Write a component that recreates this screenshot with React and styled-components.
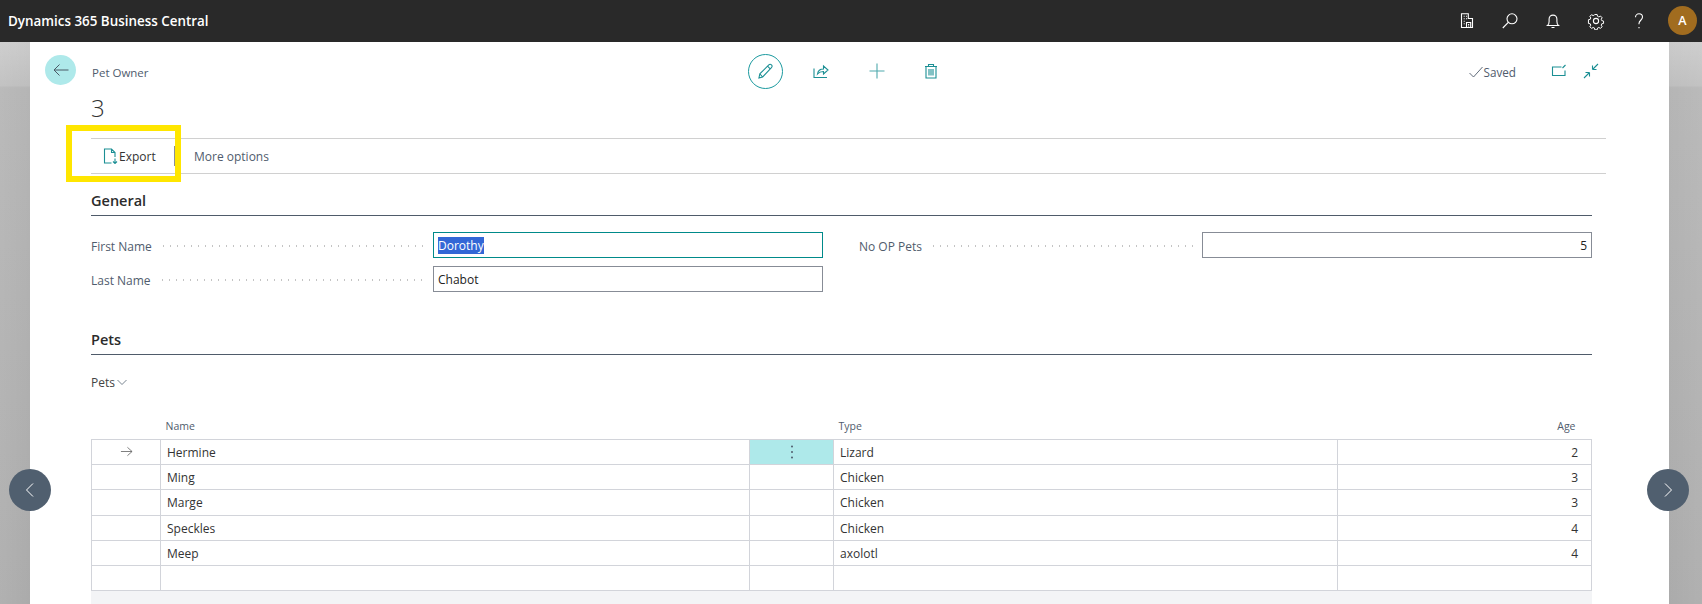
import React from 'react'
import styled, {createGlobalStyle} from 'styled-components'

const GlobalStyle = createGlobalStyle`
    html, body {
        margin: 0;
        padding: 0;
        height: 100%;
        overflow: hidden;
    }
    body {
        font-family: "Open Sans", "Noto Sans", "Liberation Sans", sans-serif;
        font-size: 13px;
        color: #333;
    }
    * {
        box-sizing: border-box;
    }
`

const Page = styled.div`
    position: relative;
    width: 1702px;
    height: 604px;
    overflow: hidden;
    display: flex;
    flex-direction: column;
`

const TopBar = styled.header`
    height: 42px;
    flex: none;
    background: #292929;
    color: #fff;
    display: flex;
    align-items: center;
    padding: 0 5px 0 8px;
`

const Brand = styled.div`
    flex: 1;
    font-size: 13.4px;
    font-weight: 600;
`

const TopIcons = styled.div`
    display: flex;
    align-items: center;
    gap: 25px;
    margin-right: 20px;
`

const TopIcon = styled.svg`
    width: 18px;
    height: 18px;
    fill: none;
    stroke: #fff;
    stroke-width: 1.1;
    display: block;
`

const Avatar = styled.div`
    width: 29px;
    height: 29px;
    border-radius: 50%;
    background: #a16c1f;
    color: #fff;
    font-size: 12.5px;
    font-weight: 600;
    display: flex;
    align-items: center;
    justify-content: center;
    margin-top: -1px;
`

const Backdrop = styled.div`
    flex: 1;
    min-height: 0;
    display: flex;
    background:
        linear-gradient(90deg, rgba(255,255,255,0.07) 0, rgba(255,255,255,0) 30px, rgba(255,255,255,0) 1668px, rgba(255,255,255,0.07) 1702px),
        linear-gradient(180deg, #cbcbcb 0, #bebebe 44px, #b6b6b6 45px, #b6b6b6 46px, #b5b5b5 47px, #ababab 100%);
    padding: 0 34px 0 30px;
`

const Panel = styled.main`
    flex: 1;
    background: #fff;
    padding: 0 77px 0 61px;
    display: flex;
    flex-direction: column;
`

const CommandRow = styled.div`
    height: 59px;
    flex: none;
    display: grid;
    grid-template-columns: 703px auto 1fr;
    align-items: center;
    margin-left: -46px;
`

const TitleArea = styled.div`
    display: flex;
    align-items: center;
    gap: 16px;
`

const BackButton = styled.div`
    width: 31px;
    height: 30px;
    border-radius: 50%;
    background: #aee9ea;
    display: flex;
    align-items: center;
    justify-content: center;
    margin-top: -3px;
`

const PageType = styled.div`
    font-size: 11.5px;
    color: #505c6d;
    margin-top: 1px;
`

const Actions = styled.div`
    display: flex;
    align-items: center;
    gap: 40px;
    margin-top: -1px;
`

const EditCircle = styled.div`
    width: 35px;
    height: 35px;
    border-radius: 50%;
    border: 1px solid #1b9a9f;
    display: flex;
    align-items: center;
    justify-content: center;
    margin-right: -10px;
`

const Icon = styled.svg`
    width: ${p => p.$size || 18}px;
    height: ${p => p.$size || 18}px;
    fill: none;
    stroke: ${p => p.$color || '#1b8f94'};
    stroke-width: ${p => p.$stroke || 1.1};
    display: block;
    flex: none;
`

const TrashIcon = styled(Icon)`
    margin-left: -2px;
`

const StatusArea = styled.div`
    display: flex;
    align-items: center;
    justify-content: flex-end;
    margin-right: -7px;
`

const Saved = styled.div`
    display: flex;
    align-items: center;
    gap: 1px;
    font-size: 11.7px;
    color: #505c6d;
    margin-right: 35px;
`

const StatusIcons = styled.div`
    display: flex;
    align-items: center;
    gap: 16px;
    margin-top: -2px;
`

const RecordTitle = styled.div`
    height: 46px;
    flex: none;
    font-size: 24px;
    font-weight: 300;
    line-height: 32px;
    color: #333;
    margin-top: -9px;
`

const ActionBar = styled.div`
    height: 36px;
    flex: none;
    border-top: 1px solid #d0d0d0;
    border-bottom: 1px solid #d0d0d0;
    display: flex;
    align-items: center;
    margin-right: -14px;
`

const ExportAction = styled.div`
    display: flex;
    align-items: center;
    gap: 1px;
    padding-left: 11px;
    width: 83px;
    color: #333;
    font-size: 12px;
`

const Separator = styled.div`
    width: 1px;
    height: 20px;
    background: #8a8f96;
`

const MoreAction = styled.div`
    color: #505c6d;
    font-size: 12px;
    margin-left: 19px;
`

const Highlight = styled.div`
    position: absolute;
    left: 66px;
    top: 125px;
    width: 115px;
    height: 57px;
    border: 6px solid #ffe600;
    pointer-events: none;
`

const SectionTitle = styled.div`
    font-size: 14.5px;
    font-weight: 600;
    color: #2b2b2b;
    height: 26px;
    line-height: 22px;
    border-bottom: 1px solid #4f5b6a;
    margin-top: ${p => p.$top || 0}px;
    flex: none;
`

const FieldColumns = styled.div`
    display: grid;
    grid-template-columns: 732px 1fr;
    gap: 36px;
    margin-top: 16px;
    height: 60px;
    flex: none;
`

const FieldStack = styled.div`
    display: flex;
    flex-direction: column;
    gap: 8px;
`

const FieldRow = styled.div`
    display: flex;
    align-items: center;
    height: 26px;
`

const FieldLabel = styled.div`
    font-size: 12px;
    color: #505c6d;
    white-space: nowrap;
    margin-top: 2px;
`

const Dots = styled.div`
    flex: 1;
    height: 2px;
    margin: 2px 8px 0 8px;
    background-image: radial-gradient(circle, #c4c4c4 0.9px, transparent 1.1px);
    background-size: 7px 2px;
    background-repeat: repeat-x;
`

const FieldBox = styled.div`
    width: ${p => p.$width}px;
    height: 26px;
    flex: none;
    border: 1px solid ${p => p.$focused ? '#008a8a' : '#878c96'};
    padding: 1px 4px 0;
    font-size: 12px;
    line-height: 23px;
    color: #222;
    text-align: ${p => p.$right ? 'right' : 'left'};
`

const Selected = styled.span`
    background: #3367d6;
    color: #fff;
    display: inline-block;
    line-height: 17px;
`

const SubHeader = styled.div`
    margin-top: 17px;
    height: 20px;
    flex: none;
    display: flex;
    align-items: center;
    gap: 2px;
    font-size: 12px;
    color: #444;
`

const GridTable = styled.table`
    border-collapse: collapse;
    table-layout: fixed;
    width: 1500px;
    margin-top: 24px;
    flex: none;
`

const HeadCell = styled.th`
    height: 23px;
    padding: 0 ${p => p.$right ? '16px' : '5px'} 3px 5px;
    font-size: 10.5px;
    font-weight: 400;
    color: #505c6d;
    text-align: ${p => p.$right ? 'right' : 'left'};
`

const Row = styled.tr`
    height: ${p => p.$tall ? 26 : 25}px;
`

const Cell = styled.td`
    padding: 1px ${p => p.$right ? '13px' : '6px'} 0 6px;
    border: 1px solid #d2d4da;
    font-size: 12px;
    color: #333;
    text-align: ${p => p.$right ? 'right' : 'left'};
    background: ${p => p.$active ? '#aee9ea' : '#fff'};
    overflow: hidden;
`

const MarkerCell = styled(Cell)`
    padding: 0;
    svg {
        margin: 0 auto;
    }
`

const Footer = styled.div`
    flex: 1;
    background: #f3f4f6;
`

const PageNav = styled.div`
    position: absolute;
    top: 469px;
    left: ${p => p.$left}px;
    width: 42px;
    height: 42px;
    border-radius: 50%;
    background: #505f6f;
    display: flex;
    align-items: center;
    justify-content: center;
`

const pets = [
    {name: 'Hermine', type: 'Lizard', age: 2, current: true},
    {name: 'Ming', type: 'Chicken', age: 3},
    {name: 'Marge', type: 'Chicken', age: 3, tall: true},
    {name: 'Speckles', type: 'Chicken', age: 4},
    {name: 'Meep', type: 'axolotl', age: 4},
    {name: '', type: '', age: ''},
]

const Field = ({label, value, width, focused, right}) => (
    <FieldRow>
        <FieldLabel>{label}</FieldLabel>
        <Dots />
        <FieldBox $width={width} $focused={focused} $right={right}>
            {focused ? <Selected>{value}</Selected> : value}
        </FieldBox>
    </FieldRow>
)

export default function App() {
    return (
        <Page>
            <GlobalStyle />
            <TopBar>
                <Brand>Dynamics 365 Business Central</Brand>
                <TopIcons>
                    <TopIcon viewBox="0 0 18 18">
                        <path d="M3.500 15.500V1.800h6.800v4.700h4.200v9zM3.500 15.500h11M5.700 4.300h1M8 4.300h1M5.700 6.800h1M8 6.800h1M5.700 9.300h1M5.700 11.800h1M8.500 15.500v-5h4.200v5M10 12.500h1.200M10 14h1.200" />
                    </TopIcon>
                    <TopIcon viewBox="0 0 18 18">
                        <circle cx="11" cy="6.800" r="5" />
                        <path d="M7.300 10.300L1.800 16" />
                    </TopIcon>
                    <TopIcon viewBox="0 0 18 18">
                        <path d="M3.500 13.500c1.200-1 1.600-2.200 1.600-4V7a3.900 3.900 0 017.800 0v2.500c0 1.800.4 3 1.600 4zM7.500 15.500h3" />
                    </TopIcon>
                    <TopIcon viewBox="0 0 18 18">
                        <circle cx="9" cy="9" r="2.600" />
                        <path d="M7.700 1.800h2.600l.4 2 1.500.7 1.800-1 1.800 1.900-1 1.700.6 1.500 2 .5v2.600l-2 .4-.6 1.500 1 1.800-1.800 1.800-1.800-1-1.500.6-.4 2H7.700l-.4-2-1.500-.6-1.800 1-1.800-1.800 1-1.800-.6-1.500-2-.4V7.600l2-.5.600-1.500-1-1.700 1.800-1.900 1.800 1 1.500-.7z" transform="translate(0.900 0.900) scale(0.9)" />
                    </TopIcon>
                    <TopIcon viewBox="0 0 18 18">
                        <path d="M5.500 5.300c0-2 1.500-3.500 3.500-3.500s3.500 1.400 3.500 3.300c0 3-3.500 3.300-3.500 6.400v.8M9 15v1.200" />
                    </TopIcon>
                </TopIcons>
                <Avatar>A</Avatar>
            </TopBar>
            <Backdrop>
                <Panel>
                    <CommandRow>
                        <TitleArea>
                            <BackButton>
                                <Icon viewBox="0 0 16 16" $size={16} $color="#4a5a66" $stroke={1}>
                                    <path d="M15.500 8H1M6.500 2.500L1 8l5.500 5.500" />
                                </Icon>
                            </BackButton>
                            <PageType>Pet Owner</PageType>
                        </TitleArea>
                        <Actions>
                            <EditCircle>
                                <Icon viewBox="0 0 18 18" $size={17}>
                                    <path d="M2 16l1-4.500L12.500 2c.8-.8 2-.8 2.800 0 .8.800.8 2 0 2.800L6 14.800zM3 11.500L6 14.800M11.200 3.400l3 3" />
                                </Icon>
                            </EditCircle>
                            <Icon viewBox="0 0 16 16" $size={16}>
                                <path d="M1 5.500V14.500h13M4.500 11c.5-3.500 3-5 6-5V3l4.500 4-4.500 4V8.500c-2.500 0-4.500.700-6 2.500z" />
                            </Icon>
                            <Icon viewBox="0 0 16 16" $size={16} $color="#4fa9ad">
                                <path d="M8 .5v15M.5 8h15" />
                            </Icon>
                            <TrashIcon viewBox="0 0 16 16" $size={16}>
                                <path d="M3 3.500V15h10V3.500M2 3.500h12M5.500 3.500V1.500h5v2M6 6v6.500M8 6v6.500M10 6v6.500" />
                            </TrashIcon>
                        </Actions>
                        <StatusArea>
                            <Saved>
                                <Icon viewBox="0 0 14 14" $size={14} $color="#505c6d" $stroke={0.9}>
                                    <path d="M.5 8l4 4L13.500 2" />
                                </Icon>
                                Saved
                            </Saved>
                            <StatusIcons>
                                <Icon viewBox="0 0 16 16" $size={16}>
                                    <path d="M10.500 4H1.500v8.500h12.500V7.500M11.500 5l3-3" />
                                </Icon>
                                <Icon viewBox="0 0 16 16" $size={16}>
                                    <path d="M1 15l5.500-5.500M6.500 9.500v4M6.500 9.500h-4M15 1L9.500 6.500M9.500 6.500v-4M9.500 6.500h4" />
                                </Icon>
                            </StatusIcons>
                        </StatusArea>
                    </CommandRow>
                    <RecordTitle>3</RecordTitle>
                    <ActionBar>
                        <ExportAction>
                            <Icon viewBox="0 0 16 16" $size={16}>
                                <path d="M9.500 15H2.500V1h7l3.500 3.500V9M9.500 1v3.500H13M13 10.500v5M11 13.500l2 2 2-2" />
                            </Icon>
                            Export
                        </ExportAction>
                        <Separator />
                        <MoreAction>More options</MoreAction>
                    </ActionBar>
                    <SectionTitle $top={16}>General</SectionTitle>
                    <FieldColumns>
                        <FieldStack>
                            <Field label="First Name" value="Dorothy" width={390} focused />
                            <Field label="Last Name" value="Chabot" width={390} />
                        </FieldStack>
                        <FieldStack>
                            <Field label="No OP Pets" value="5" width={390} right />
                        </FieldStack>
                    </FieldColumns>
                    <SectionTitle $top={37}>Pets</SectionTitle>
                    <SubHeader>
                        Pets
                        <Icon viewBox="0 0 10 10" $size={10} $color="#6a7684" $stroke={0.9}>
                            <path d="M.5 3l4.500 4.500L9.500 3" />
                        </Icon>
                    </SubHeader>
                    <GridTable>
                        <colgroup>
                            <col width="69" />
                            <col width="589" />
                            <col width="84" />
                            <col width="504" />
                            <col width="254" />
                        </colgroup>
                        <thead>
                            <tr>
                                <HeadCell />
                                <HeadCell>Name</HeadCell>
                                <HeadCell />
                                <HeadCell>Type</HeadCell>
                                <HeadCell $right>Age</HeadCell>
                            </tr>
                        </thead>
                        <tbody>
                            {pets.map((pet, i) => (
                                <Row key={i} $tall={pet.tall}>
                                    <MarkerCell>
                                        {pet.current && (
                                            <Icon viewBox="0 0 14 14" $size={13} $color="#666" $stroke={0.9}>
                                                <path d="M1 7h12M8 2.500L13 7l-5 4.500" />
                                            </Icon>
                                        )}
                                    </MarkerCell>
                                    <Cell>{pet.name}</Cell>
                                    <MarkerCell $active={pet.current}>
                                        {pet.current && (
                                            <Icon viewBox="0 0 4 14" $size={14} $color="none">
                                                <circle cx="2" cy="1.500" r="1" fill="#505c6d" />
                                                <circle cx="2" cy="7" r="1" fill="#505c6d" />
                                                <circle cx="2" cy="12.500" r="1" fill="#505c6d" />
                                            </Icon>
                                        )}
                                    </MarkerCell>
                                    <Cell>{pet.type}</Cell>
                                    <Cell $right>{pet.age}</Cell>
                                </Row>
                            ))}
                        </tbody>
                    </GridTable>
                    <Footer />
                </Panel>
            </Backdrop>
            <Highlight />
            <PageNav $left={9}>
                <Icon viewBox="0 0 14 14" $size={14} $color="#fff" $stroke={1}>
                    <path d="M10 .5L3.500 7l6.500 6.500" />
                </Icon>
            </PageNav>
            <PageNav $left={1647}>
                <Icon viewBox="0 0 14 14" $size={14} $color="#fff" $stroke={1}>
                    <path d="M4 .5L10.500 7 4 13.500" />
                </Icon>
            </PageNav>
        </Page>
    )
}
